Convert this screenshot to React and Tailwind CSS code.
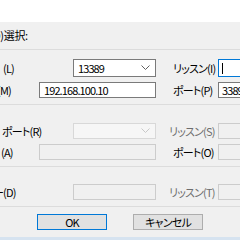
import React from "react";

const font = { fontFamily: '"Noto Sans CJK JP", "Noto Sans", sans-serif' };

function Chevron({ disabled }) {
  return (
    <svg width="9" height="6" viewBox="0 0 9 6" className="shrink-0">
      <path d="M0.5 0.5 L4.5 4.5 L8.5 0.5" fill="none" stroke={disabled ? "#c8c8c8" : "#606060"} strokeWidth="1" />
    </svg>
  );
}

function Sep({ mt }) {
  return (
    <div className={mt + " shrink-0"}>
      <div className="h-px bg-[#dcdcdc]" />
    </div>
  );
}

export default function App() {
  return (
    <div
      className="w-[240px] h-[240px] overflow-hidden bg-[#f0f0f0] flex flex-col text-[11px] leading-none text-black tracking-[-0.8px] [font-feature-settings:'palt']"
      style={font}
    >
      <div className="h-[22px] bg-white shrink-0" />
      <div className="h-[27px] flex items-center shrink-0 whitespace-nowrap">
        <span className="-ml-[11px] tracking-[-0.3px]">(O)選択:</span>
      </div>
      <Sep mt="mt-0" />
      {/* Row 1 */}
      <div className="flex items-center h-[18px] mt-[9px] shrink-0 whitespace-nowrap">
        <span className="ml-[3px] w-[70px] shrink-0">(L)</span>
        <div className="w-[83px] h-[18px] bg-white border border-[#7a7a7a] flex items-center justify-between pl-[4px] pr-[5px] shrink-0">
          <span className="tracking-[-0.9px]">13389</span>
          <Chevron />
        </div>
        <span className="ml-[17px] w-[45px] shrink-0">リッスン(I)</span>
        <div className="w-[40px] h-[18px] bg-white border border-[#0078d7] flex items-center pl-[3px] shrink-0">
          <div className="w-px h-[11px] bg-black" />
        </div>
      </div>
      {/* Row 2 */}
      <div className="flex items-center h-[16px] mt-[5px] shrink-0 whitespace-nowrap">
        <span className="-ml-[3px] w-[42px] shrink-0">(M)</span>
        <div className="w-[117px] h-[16px] bg-white border border-[#7a7a7a] flex items-center pl-[4px] shrink-0">
          <span className="tracking-[-0.9px]">192.168.100.10</span>
        </div>
        <span className="ml-[17px] w-[45px] shrink-0">ポート(P)</span>
        <div className="w-[40px] h-[16px] bg-white border border-[#7a7a7a] flex items-center pl-[3px] shrink-0 overflow-hidden">
          <span className="tracking-[-0.9px]">3389</span>
        </div>
      </div>
      <Sep mt="mt-[6px]" />
      {/* Row 3 */}
      <div className="flex items-center h-[16px] mt-[18px] shrink-0 whitespace-nowrap">
        <span className="ml-[2px] w-[71px] shrink-0">ポート(R)</span>
        <div className="w-[83px] h-[16px] bg-[#f6f6f6] border border-[#d8d8d8] flex items-center justify-end pr-[5px] shrink-0">
          <Chevron disabled />
        </div>
        <span className="ml-[13px] w-[49px] shrink-0 text-[#6d6d6d]">リッスン(S)</span>
        <div className="w-[40px] h-[16px] bg-[#f0f0f0] border border-[#cccccc] shrink-0" />
      </div>
      {/* Row 4 */}
      <div className="flex items-center h-[16px] mt-[5px] shrink-0 whitespace-nowrap">
        <span className="ml-[1px] w-[38px] shrink-0">(A)</span>
        <div className="w-[117px] h-[16px] bg-[#f0f0f0] border border-[#cccccc] shrink-0" />
        <span className="ml-[17px] w-[45px] shrink-0">ポート(O)</span>
        <div className="w-[40px] h-[16px] bg-[#f0f0f0] border border-[#cccccc] shrink-0" />
      </div>
      <Sep mt="mt-[6px]" />
      {/* Row 5 */}
      <div className="flex items-center h-[16px] mt-[17px] shrink-0 whitespace-nowrap">
        <span className="-ml-[7px] w-[80px] shrink-0">ー(D)</span>
        <div className="w-[83px] h-[16px] bg-[#f0f0f0] border border-[#cccccc] shrink-0" />
        <span className="ml-[13px] w-[49px] shrink-0 text-[#6d6d6d]">リッスン(T)</span>
        <div className="w-[40px] h-[16px] bg-[#f0f0f0] border border-[#cccccc] shrink-0" />
      </div>
      <Sep mt="mt-[6px]" />
      <div className="flex items-center mt-[7px] shrink-0 whitespace-nowrap">
        <div className="ml-[37px] w-[70px] h-[16px] bg-[#e1e1e1] border border-[#0078d7] flex items-center justify-center shrink-0">OK</div>
        <div className="ml-[26px] w-[70px] h-[16px] bg-[#e1e1e1] border border-[#adadad] flex items-center justify-center shrink-0">キャンセル</div>
      </div>
      <div className="mt-auto h-[3px] bg-[#d6e3f0] shrink-0" />
    </div>
  );
}
